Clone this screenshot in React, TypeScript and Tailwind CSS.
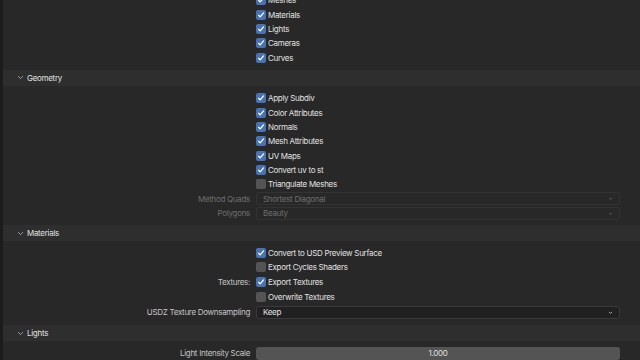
import React from "react";

const CheckIcon = () => (
  <svg viewBox="0 0 10 10" className="h-[8px] w-[8px]" fill="none" stroke="white" strokeWidth={1.6} strokeLinecap="round" strokeLinejoin="round">
    <path d="M2 5.4l2 2L8.2 2.4" />
  </svg>
);

function Check({ label, checked }: { label: string; checked?: boolean }) {
  return (
    <div className="flex items-center gap-[2px]">
      <div
        className={
          "flex h-[10px] w-[10px] items-center justify-center rounded-[2px] " +
          (checked ? "bg-[#4772b3]" : "bg-[#545454]")
        }
      >
        {checked && <CheckIcon />}
      </div>
      <span className="text-[#e0e0e0]">{label}</span>
    </div>
  );
}

function Row({ label, children, h = "h-[14.4px]", dim }: { label?: string; children?: React.ReactNode; h?: string; dim?: boolean }) {
  return (
    <div className={"flex items-center " + h}>
      <div className={"w-[253px] shrink-0 pr-[6px] text-right " + (dim ? "text-[#6e6e6e]" : "text-[#c4c4c4]")}>{label}</div>
      <div className="flex-1 pr-[20px]">{children}</div>
    </div>
  );
}

function Chevron() {
  return (
    <svg viewBox="0 0 8 8" className="h-[7px] w-[7px]" fill="none" stroke="#bdbdbd" strokeWidth={0.9} strokeLinecap="round" strokeLinejoin="round">
      <path d="M1.5 2.8L4 5.3l2.5-2.5" />
    </svg>
  );
}

function Header({ title }: { title: string }) {
  return (
    <div className="flex h-[16px] items-center gap-[3px] bg-[#2e2e2e] pl-[14px] text-[#e0e0e0]">
      <Chevron />
      <span>{title}</span>
    </div>
  );
}

function Select({ value, disabled }: { value: string; disabled?: boolean }) {
  return (
    <div
      className={
        "flex h-[13px] items-center justify-between rounded-[3px] border px-[6px] " +
        (disabled ? "border-[#333] bg-[#282828] text-[#6e6e6e]" : "border-[#3a3a3a] bg-[#202020] text-[#e0e0e0]")
      }
    >
      <span>{value}</span>
      <svg viewBox="0 0 8 8" className="h-[5px] w-[5px]" fill="none" stroke={disabled ? "#6e6e6e" : "#cfcfcf"} strokeWidth={1.2}>
        <path d="M1.5 3L4 5.5 6.5 3" />
      </svg>
    </div>
  );
}

export default function App() {
  return (
    <div
      className="flex h-[360px] w-[640px] overflow-hidden bg-[#282828] text-[8px] leading-none tracking-[-0.3px]"
      style={{ fontFamily: "Inter, 'Noto Sans', sans-serif" }}
    >
      <div className="w-[3px] shrink-0 bg-[#1c1c1c]" />
      <div className="flex-1">
        <div className="-mt-[7px] pb-[5px]">
          <Row><Check label="Meshes" checked /></Row>
          <Row><Check label="Materials" checked /></Row>
          <Row><Check label="Lights" checked /></Row>
          <Row><Check label="Cameras" checked /></Row>
          <Row><Check label="Curves" checked /></Row>
        </div>

        <Header title="Geometry" />
        <div className="py-[5px]">
          <Row><Check label="Apply Subdiv" checked /></Row>
          <Row><Check label="Color Attributes" checked /></Row>
          <Row><Check label="Normals" checked /></Row>
          <Row><Check label="Mesh Attributes" checked /></Row>
          <Row><Check label="UV Maps" checked /></Row>
          <Row><Check label="Convert uv to st" checked /></Row>
          <Row><Check label="Triangulate Meshes" /></Row>
          <Row label="Method Quads" dim>
            <Select value="Shortest Diagonal" disabled />
          </Row>
          <Row label="Polygons" dim>
            <Select value="Beauty" disabled />
          </Row>
        </div>

        <Header title="Materials" />
        <div className="py-[5px]">
          <Row h="h-[14px]"><Check label="Convert to USD Preview Surface" checked /></Row>
          <Row h="h-[14px]"><Check label="Export Cycles Shaders" /></Row>
          <Row label="Textures:" h="h-[16px]"><Check label="Export Textures" checked /></Row>
          <Row h="h-[14px]"><Check label="Overwrite Textures" /></Row>
          <Row label="USDZ Texture Downsampling" h="h-[16px]"><Select value="Keep" /></Row>
        </div>

        <Header title="Lights" />
        <div className="py-[5px]">
          <Row label="Light Intensity Scale" h="h-[14px]">
            <div className="flex h-[13px] items-center justify-center rounded-[3px] bg-[#545454] text-[#e0e0e0]">1.000</div>
          </Row>
        </div>
      </div>
    </div>
  );
}
